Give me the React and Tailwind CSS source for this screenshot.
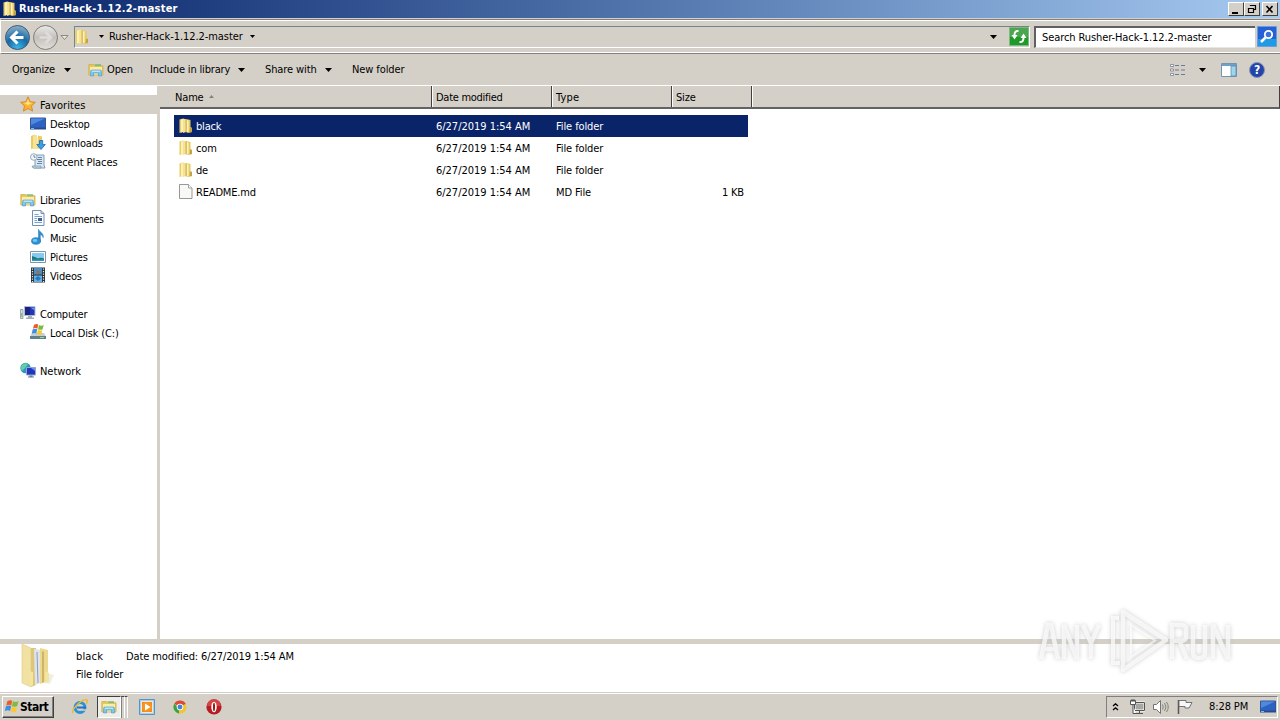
import React from "react";

const Svg = ({ w = 16, h = w, vb = "0 0 16 16", className = "", children }) => (
  <svg width={w} height={h} viewBox={vb} className={"shrink-0 " + className}>{children}</svg>
);

const Folder = ({ w = 16, className }) => (
  <Svg w={w} className={className}>
    <path d="M1.500 1.500L5 .5V14l-3.500 1z" fill="#e9cd62" />
    <path d="M5 .5l3 .8V14L5 15z" fill="#f6e28f" />
    <path d="M3 1.500L5 1v13l-2 .5z" fill="#fbf0b8" />
    <path d="M8 1l4.500 1v7l1.500 1v4l-4 1-2-1z" fill="#e6ca64" />
    <path d="M8.800 2l1.700.5v11.500l-1.700-.3z" fill="#fff3bd" />
    <path d="M12 9.500l2 .5v4l-2.500.6z" fill="#c5a243" />
    <path d="M8 1.500v13" stroke="#b99636" strokeWidth=".6" />
  </Svg>
);

const LibFolder = ({ w = 16, className }) => (
  <Svg w={w} className={className}>
    <path d="M.8 2.500h5l1.500 1.300H15v9.200H.8z" fill="#e6c95c" stroke="#d0b04c" strokeWidth=".8" />
    <path d="M2 5h12v7.500H2z" fill="#f9edaa" />
    <path d="M7 3h6" stroke="#5bb26b" strokeWidth="1.200" />
    <path d="M2.500 14V9.500Q2.500 8 4 8h8q1.500 0 1.500 1.500V14h-3v-3h-5v3z" fill="#7cc5ec" stroke="#4a97ca" strokeWidth=".6" />
    <path d="M4 9.200h8" stroke="#d8f1ff" />
  </Svg>
);

const Star = () => (
  <Svg className="-mt-px">
    <path d="M8 .8l2.200 4.900 5.200.6-3.900 3.600 1.100 5.200L8 12.500l-4.600 2.600 1.100-5.200L.6 6.300l5.200-.6z" fill="#fbb42d" stroke="#d98324" strokeWidth=".9" />
    <path d="M8 3l1.300 3.600 3 .4L8 9 4 7l3-.4z" fill="#ffe48a" />
  </Svg>
);

const Desktop = () => (
  <Svg>
    <path d="M.5 2h15v10.500H.5z" fill="#2c62c4" stroke="#3a5490" />
    <path d="M1 2.500h14L1 9z" fill="#4f8ae0" />
    <path d="M0 11.500h16V13.500H0z" fill="#2a4a8e" />
    <path d="M1 12h3v1H1z" fill="#66c4ea" />
  </Svg>
);

const Downloads = () => (
  <Svg className="-mt-px">
    <path d="M1 2l4-1.500V14l-4 1z" fill="#e9cd62" />
    <path d="M5 1h2v14H3V2z" fill="#f7e395" />
    <path d="M8 1.500l4 1v12H7z" fill="#e9cc67" />
    <path d="M9.500 6.500h3.200v4h2.600L11 15.500 6.800 10.500h2.700z" fill="#39a0e8" stroke="#1c67b0" strokeWidth=".8" />
  </Svg>
);

const Recent = () => (
  <Svg className="-mt-px">
    <path d="M5 2h9v10l1 3H4l1-3z" fill="#dbe7f0" stroke="#7593ab" strokeWidth=".9" />
    <path d="M8 4.500h4M7 6.500h5M8 8.500h4M7 10.500h5" stroke="#5f87aa" />
    <path d="M2 13h9v2H3z" fill="#c3d4e1" stroke="#7593ab" strokeWidth=".7" />
    <circle cx="3.800" cy="4" r="3.300" fill="#f2f6f9" stroke="#8da2b3" strokeWidth=".9" />
    <path d="M4 2v2.200h1.600" fill="none" stroke="#4d6a82" strokeWidth=".8" />
  </Svg>
);

const Documents = () => (
  <Svg className="-mt-px">
    <path d="M2.500.5h8.500l3 3v12H2.500z" fill="#f7fbff" stroke="#768fa8" />
    <path d="M11 .5v3h3" fill="none" stroke="#768fa8" />
    <path d="M4.500 4.500h4M4.500 6.500h7.500M4.500 12.500h7.500" stroke="#7ea3c6" />
    <path d="M4.500 8.500h2.500M4.500 10.500h2.500" stroke="#7ea3c6" />
    <path d="M8 8h4v3H8z" fill="#3b5f9e" />
  </Svg>
);

const Music = () => (
  <Svg className="-mt-px">
    <path d="M8.500.3c1 3 5.500 3.600 4.700 8.400-.4-2-1.700-2.900-2.900-3.100v7.400H8.500z" fill="#2d8ed0" stroke="#1e6fae" strokeWidth=".5" />
    <ellipse cx="6" cy="12" rx="4.500" ry="3.300" fill="#2c91d6" stroke="#1b6cab" strokeWidth=".6" />
    <ellipse cx="5" cy="11.500" rx="2.300" ry="1.400" fill="#72c9f4" />
  </Svg>
);

const Pictures = () => (
  <Svg>
    <path d="M.5 2.500h15v11H.5z" fill="#fff" stroke="#8095a6" />
    <path d="M2 4h12v8H2z" fill="#84cbed" />
    <path d="M2 7q4 1 6 2.500 3-1.500 6 0v1.500H2z" fill="#23777a" />
    <path d="M2 10.500h12V12H2z" fill="#2b9bc5" />
  </Svg>
);

const Videos = () => (
  <Svg className="-mt-px">
    <path d="M1 .5h14v15H1z" fill="#27323c" />
    <path d="M4 1h8v6.500H4z" fill="#4d8fc3" />
    <path d="M4 8.500h8v6.500H4z" fill="#63b2e3" />
    <path d="M5 6l3-3 3 3.500z" fill="#a36b49" />
    <path d="M8 9l3 2.500-3 2.500-3-2.500z" fill="#2c75b6" />
    <path d="M2.500 1.500v14M13.500 1.500v14" stroke="#e5ecf1" strokeWidth="1.200" strokeDasharray="1.200 1.300" />
  </Svg>
);

const Computer = () => (
  <Svg className="-mt-px">
    <path d="M.5 4.500h2.500v9H.5z" fill="#d7dfe3" stroke="#8795a0" strokeWidth=".8" />
    <path d="M1.300 8h1v4h-1z" fill="#67b757" />
    <path d="M4.500 1.500h10.500v9H4.500z" fill="#2237b5" stroke="#b3bccb" />
    <path d="M5 2h5v8H5z" fill="#1b2389" />
    <path d="M10.500 2.500h4v3z" fill="#6d94ee" />
    <path d="M8 11h4v1.500h2v1.500H6v-1.500h2z" fill="#a5afb9" />
  </Svg>
);

const Flag = () => (
  <g>
    <path d="M3.300 2.300Q6 .3 8.200 1.800L7.300 6.500Q5 5 2.300 6.500z" fill="#ef5a2a" />
    <path d="M9 2.200q2.700 1.600 5.500 0L13.200 7Q10.500 8.500 8 7z" fill="#7cbb3c" />
    <path d="M2 7.200Q5 5.800 7.200 7.200L6 12Q4 10.600.8 12z" fill="#3d8fe0" />
    <path d="M7.900 7.800q2.400 1.500 5.100.2l-1.300 5q-2.300 1-5-.4z" fill="#fbc734" />
  </g>
);

const Disk = () => (
  <Svg className="-mt-px">
    <path d="M2 9h12l2 3.500H0z" fill="#c3ced5" />
    <path d="M0 12h16v3H0z" fill="#62818f" />
    <path d="M10 13h4v1h-4z" fill="#8be36d" />
    <g transform="translate(1 -1) scale(.88)"><Flag /></g>
  </Svg>
);

const Network = () => (
  <Svg className="-mt-px">
    <circle cx="5.500" cy="6" r="5.200" fill="#2c96bd" />
    <path d="M2 3q3-3 6-1L6 5 4 7 2 9q-2-3 0-6" fill="#63cfa2" />
    <path d="M6.500 5.500h9v7.500h-9z" fill="#2136bb" stroke="#8ea6d2" />
    <path d="M11 6h4v3z" fill="#6a90ec" />
    <path d="M9.500 13.500h3v1H14v1H8v-1h1.500z" fill="#6b7ba0" />
  </Svg>
);

const Tri = ({ className = "" }) => (
  <Svg w={7} h={4} vb="0 0 7 4" className={className}><path d="M0 0h7L3.500 4z" fill="#000" /></Svg>
);
const SmallTri = ({ className = "" }) => (
  <Svg w={5} h={3} vb="0 0 5 3" className={className}><path d="M0 0h5L2.500 3z" fill="#000" /></Svg>
);

const WinBtn = ({ children, className = "" }) => (
  <div className={"flex h-[14px] w-[16px] items-center justify-center border border-t-white border-l-white border-r-[#404040] border-b-[#404040] bg-[#d4d0c8] " + className}>
    <Svg w={12} h={11} vb="0 0 12 11">{children}</Svg>
  </div>
);

const NavItem = ({ icon, text, root, active, track = "tracking-[-0.17px]" }) => (
  <div className={"flex h-[19px] items-center gap-1 " + (root ? "pl-[20px] " : "pl-[30px] ") + (active ? "bg-[#d4d0c8] " : "") + track}>
    {icon}
    <span className="pt-[2px]">{text}</span>
  </div>
);

const HeadCell = ({ className, children }) => (
  <div className={"flex h-full items-center border-r border-[#404040] pt-[2px] " + className}>{children}</div>
);

const files = [
  { name: "black", type: "File folder", size: "", selected: true },
  { name: "com", type: "File folder", size: "" },
  { name: "de", type: "File folder", size: "" },
  { name: "README.md", type: "MD File", size: "1 KB" },
];

const Page = () => (
  <Svg>
    <path d="M1.500.5h9l3.500 3.500v10.500H1.500z" fill="#f8f8f6" stroke="#8c8c88" strokeWidth=".9" />
    <path d="M10.500.5V4H14" fill="#fff" stroke="#8c8c88" strokeWidth=".8" />
  </Svg>
);

export default function App() {
  return (
    <div className="flex h-[720px] w-[1280px] flex-col overflow-hidden bg-[#d4d0c8] font-['DejaVu_Sans_Condensed','DejaVu_Sans',sans-serif] text-[11px] leading-[14px] tracking-[-0.17px] whitespace-nowrap text-black [font-stretch:condensed]">
      <div className="flex h-[18px] shrink-0 items-center bg-linear-to-r from-[#0a246a] to-[#a6caf0] pl-[2px]">
        <Folder />
        <span className="ml-px text-[11px] font-bold tracking-[0.22px] text-white">Rusher-Hack-1.12.2-master</span>
        <div className="ml-auto flex pr-[2px]">
          <WinBtn><path d="M2 8h6v2H2z" /></WinBtn>
          <WinBtn>
            <path d="M4.500 2v-.5h5v4H8M4 1.500h6M2.500 4.500h5v4h-5zM2 4.500h6" fill="none" stroke="#000" strokeWidth="1.200" />
          </WinBtn>
          <WinBtn className="ml-[2px]"><path d="M2.500 2l6 6.500M8.500 2l-6 6.500" stroke="#000" strokeWidth="1.600" /></WinBtn>
        </div>
      </div>

      <div className="mt-px flex h-[35px] shrink-0 items-center border-t border-b border-l border-t-[#808080] border-b-[#808080] border-l-white pl-[3px] shadow-[inset_0_1px_0_#fff,inset_0_-1px_0_#fff]">
        <svg width="66" height="28" viewBox="0 0 66 28" className="shrink-0">
          <defs>
            <radialGradient id="back" cx=".5" cy=".95" r=".95"><stop offset="0" stopColor="#39b9ec" /><stop offset=".5" stopColor="#176aa5" /><stop offset="1" stopColor="#8fb3cb" /></radialGradient>
            <linearGradient id="fwd" x2="0" y2="1"><stop offset="0" stopColor="#ecebe9" /><stop offset=".5" stopColor="#c3c0bc" /><stop offset="1" stopColor="#e3e0dc" /></linearGradient>
          </defs>
          <circle cx="13.500" cy="14.500" r="12" fill="url(#back)" stroke="#3c5a74" />
          <path d="M13.500 8.500L7.500 14.500l6 6M8 14.500h11.500" fill="none" stroke="#fff" strokeWidth="3" />
          <circle cx="41.500" cy="14.500" r="12" fill="url(#fwd)" stroke="#7e7b78" />
          <path d="M41.500 9l5.500 5.500-5.500 5.500M47 14.500H35.500" fill="none" stroke="#dedbd8" strokeWidth="2.600" />
          <path d="M57 12.500h7l-3.500 4z" fill="#e9e7e2" stroke="#77746f" strokeWidth=".8" />
        </svg>
        <div className="ml-[4px] flex h-[22px] w-[956px] items-center border border-t-[#738584] border-l-[#738584] border-r-white border-b-white">
          <Folder className="-ml-px" />
          <SmallTri className="ml-[9px]" />
          <span className="ml-[5px] tracking-[-0.06px]">Rusher-Hack-1.12.2-master</span>
          <SmallTri className="ml-[7px]" />
          <Tri className="ml-auto mr-[12px]" />
          <Svg w={20} h={19} vb="0 0 20 19">
            <path d="M.5.5h19v18H.5z" fill="#4ba64f" stroke="#7fb981" />
            <path d="M1 10h18v8H1z" fill="#1f9a2a" />
            <path d="M9.500 4q-4-.500-4 4" fill="none" stroke="#fff" strokeWidth="2" />
            <path d="M2.500 8h6l-3 4.500z" fill="#fff" />
            <path d="M10.500 15q4 .5 4-4" fill="none" stroke="#fff" strokeWidth="2" />
            <path d="M11.500 11h6l-3-4.500z" fill="#fff" />
          </Svg>
        </div>
        <div className="ml-[4px] flex h-[22px] w-[221px] items-center border-t-2 border-l-2 border-b border-t-[#606060] border-l-[#606060] border-b-[#e8e6e0] bg-white pt-px pl-[6px] tracking-[-0.09px]">Search Rusher-Hack-1.12.2-master</div>
        <Svg w={20} h={21} vb="0 0 20 21" className="ml-[2px]">
          <path d="M.5.500h19v20H.5z" fill="#2560d4" stroke="#6b9be4" />
          <path d="M1 13h18v7H1z" fill="#1f9ae4" />
          <circle cx="11.500" cy="8.500" r="3.700" fill="#3b71d9" stroke="#fff" strokeWidth="1.800" />
          <path d="M8.500 11.500L4 16" stroke="#fff" strokeWidth="2.500" />
        </Svg>
      </div>

      <div className="flex h-[32px] shrink-0 items-center border-b border-white pl-[12px]">
        <span className="w-[43px] pt-px">Organize</span><Tri className="ml-[9px]" />
        <LibFolder className="ml-[17px]" /><span className="ml-[3px] w-[27px] pt-px tracking-[-0.1px]">Open</span>
        <span className="ml-[16px] w-[80px] pt-px">Include in library</span><Tri className="ml-[8px]" />
        <span className="ml-[20px] w-[51px] pt-px tracking-[-0.1px]">Share with</span><Tri className="ml-[9px]" />
        <span className="ml-[20px] pt-px tracking-[-0.1px]">New folder</span>
        <div className="ml-auto flex items-center pr-[15px]">
          <Svg w={16} h={14} vb="0 0 16 14">
            <path d="M.5 1.500h3v2h-3zM.5 6h3v2h-3zM.5 10.500h3v2h-3z" fill="#fff" stroke="#777d85" strokeWidth=".8" />
            <path d="M5 2.500h4M11 2.500h4M5 7h4M11 7h4M5 11.500h4M11 11.500h4" stroke="#667d96" />
          </Svg>
          <Tri className="ml-[13px]" />
          <Svg w={16} h={14} vb="0 0 16 14" className="ml-[15px]">
            <path d="M.5.500h15v13H.5z" fill="#fff" stroke="#7394b0" />
            <path d="M1 1h14v2H1z" fill="#6fa0c6" />
            <path d="M10 3h5v10h-5z" fill="#9ed5ee" stroke="#5683a6" strokeWidth=".7" />
          </Svg>
          <div className="ml-[12px] flex h-4 w-4 items-center justify-center rounded-full border border-[#8992b8] bg-[#2345a8] text-[12px] font-bold text-white">?</div>
        </div>
      </div>

      <div className="flex h-[553px] shrink-0 bg-white">
        <div className="flex w-[157px] flex-col pt-[9px]">
          <NavItem root active icon={<Star />} text="Favorites" track="tracking-[0.1px]" />
          <NavItem icon={<Desktop />} text="Desktop" />
          <NavItem icon={<Downloads />} text="Downloads" />
          <NavItem icon={<Recent />} text="Recent Places" track="tracking-[-0.1px]" />
          <div className="h-[19px]" />
          <NavItem root icon={<LibFolder />} text="Libraries" track="tracking-[-0.25px]" />
          <NavItem icon={<Documents />} text="Documents" track="tracking-[-0.3px]" />
          <NavItem icon={<Music />} text="Music" track="tracking-[-0.35px]" />
          <NavItem icon={<Pictures />} text="Pictures" />
          <NavItem icon={<Videos />} text="Videos" />
          <div className="h-[19px]" />
          <NavItem root icon={<Computer />} text="Computer" track="tracking-[-0.25px]" />
          <NavItem icon={<Disk />} text="Local Disk (C:)" />
          <div className="h-[19px]" />
          <NavItem root icon={<Network />} text="Network" track="tracking-[-0.05px]" />
        </div>
        <div className="w-[3px] bg-[#d4d0c8]" />
        <div className="flex flex-1 flex-col">
          <div className="flex h-[23px] items-center border-r border-b-2 border-[#404040] border-b-[#626262] bg-[#d4d0c8]">
            <HeadCell className="w-[272px] pl-[15px]">Name
              <Svg w={5} h={3} vb="0 0 5 3" className="mb-[3px] ml-[5px]"><path d="M0 3h5L2.500 0z" fill="#85827d" /></Svg>
            </HeadCell>
            <HeadCell className="w-[120px] border-l border-l-white pl-[3px] tracking-[-0.27px]">Date modified</HeadCell>
            <HeadCell className="w-[120px] border-l border-l-white pl-[3px] tracking-[0.2px]">Type</HeadCell>
            <HeadCell className="w-[80px] border-l border-l-white pl-[3px]">Size</HeadCell>
            <div className="h-full w-px bg-white" />
          </div>
          <div className="mt-[6px] ml-[14px] flex w-[574px] flex-col">
            {files.map((f) => (
              <div key={f.name} className={"flex h-[22px] items-center " + (f.selected ? "bg-[#0a246a] text-white" : "")}>
                <div className="flex w-[262px] items-center gap-[2px] pl-[4px]">{f.size ? <Page /> : <Folder />}<span className="pt-[2px]">{f.name}</span></div>
                <div className="w-[120px] pt-[2px] tracking-[-0.02px]">6/27/2019 1:54 AM</div>
                <div className="w-[120px] pt-[2px] tracking-[-0.1px]">{f.type}</div>
                <div className="flex-1 pt-[2px] pr-[4px] text-right">{f.size}</div>
              </div>
            ))}
          </div>
        </div>
      </div>

      <div className="relative h-[5px] shrink-0 bg-[#d4d0c8]">
        <svg width="210" height="76" viewBox="0 0 210 76" className="absolute -top-[37px] left-[1030px] z-10 drop-shadow-[0_0_2px_#bbb]">
          <g fill="none" stroke="#fff" strokeWidth="4.500" strokeOpacity=".72">
            <path d="M11 57l7-34h3l7 34M14 47h12" />
            <path d="M34 57V23l13 34V23" />
            <path d="M53 23l8 18 8-18M61 41v16" />
            <path d="M89 16h-6v45h7" strokeWidth="4" />
            <path d="M93 10v58L136 38z" strokeWidth="4.500" strokeLinejoin="round" />
            <path d="M101 23v32L125 38.500z" strokeWidth="2" strokeOpacity=".6" />
            <path d="M142 57V23h9q5 0 5 5v6q0 5-5 5h-9M150 40l7 17" />
            <path d="M163 23v27q0 6 6 6t6-6V23" />
            <path d="M183 57V23l15 34V23" />
          </g>
        </svg>
      </div>
      <div className="flex h-[48px] shrink-0 bg-white">
        <svg width="36" height="46" viewBox="0 0 36 46" className="ml-[20px] shrink-0">
          <path d="M27 29l7 2-4 9-6-1z" fill="#f0eee6" />
          <path d="M2 0l9 4v39l-9-4z" fill="#f1e1a2" stroke="#dfcb85" strokeWidth=".6" />
          <path d="M11 4l5 0v37l-5 2z" fill="#dcc677" />
          <path d="M14 5l7 1v33l-6 2z" fill="#dfe4ea" />
          <path d="M17 8l1 31" stroke="#8c9cb8" />
          <path d="M20 4l8 2v31l-8 3z" fill="#ecd98d" />
          <path d="M22 7l2 1v30l-2 1z" fill="#cfb465" />
          <path d="M9 27l4 1v13l-3 2zM25 27l4 2v9l-4 1z" fill="#f4e4a2" />
        </svg>
        <div className="ml-[20px] flex flex-col gap-[4px] pt-[6px]">
          <div className="flex"><span className="w-[50px] tracking-[0.15px]">black</span><span className="tracking-[-0.1px]">Date modified: 6/27/2019 1:54 AM</span></div>
          <span className="tracking-[-0.1px]">File folder</span>
        </div>
      </div>

      <div className="flex h-[28px] shrink-0 items-center border-t border-[#d4d0c8] shadow-[inset_0_1px_0_#fff]">
        <div className="mt-[1px] ml-[2px] flex h-[22px] w-[52px] items-center border border-t-white border-l-white border-r-[#404040] border-b-[#404040] pl-px text-[12px] font-bold tracking-[-0.5px] shadow-[inset_-1px_-1px_0_#808080]">
          <Svg w={16}><Flag /></Svg><span>Start</span>
        </div>
        <Svg w={16} className="ml-[18px]">
          <circle cx="8" cy="8.500" r="5" fill="none" stroke="#2b91d9" strokeWidth="3" />
          <path d="M5 8.500h9" stroke="#2374c0" strokeWidth="2" />
          <path d="M1 14Q-1 12 5 6T15 1q1 1-1 4" fill="none" stroke="#e8ba38" strokeWidth="1.500" />
          <path d="M10 11h5" stroke="#d4d0c8" strokeWidth="1.500" />
        </Svg>
        <div className="ml-[9px] flex h-[22px] w-[24px] items-center border border-t-[#404040] border-l-[#404040] border-r-white border-b-white bg-[#efede9] pl-[3px]"><LibFolder /></div>
        <div className="h-[22px] w-[4px] border-r border-l border-t border-t-[#404040] border-r-white border-l-[#808080]" />
        <div className="h-[22px] w-[3px] border-r border-t border-t-[#404040] border-r-white" />
        <Svg w={16} className="ml-[11px]">
          <path d="M.5.500h15v15H.5z" fill="#a9cfea" stroke="#5594c4" />
          <path d="M2.500 2.500h11v11h-11z" fill="#f18a18" stroke="#fff" strokeWidth=".7" />
          <circle cx="8" cy="8" r="5" fill="#f79523" />
          <path d="M6 4.500l5.500 3.500L6 11.500z" fill="#fff" />
        </Svg>
        <Svg w={14} className="ml-[18px]">
          <circle cx="8" cy="8" r="7.500" fill="#f0c630" />
          <path d="M8 8L1.500 4.300A7.500 7.500 0 0 1 14.500 4.300z" fill="#df4838" />
          <path d="M1.500 4.200L6.500 10 7 15.400A7.500 7.500 0 0 1 1.500 4.200" fill="#34a350" />
          <circle cx="8" cy="8" r="3.700" fill="#fff" /><circle cx="8" cy="8" r="2.800" fill="#4285d8" />
        </Svg>
        <Svg w={16} className="ml-[19px]">
          <circle cx="8" cy="8" r="7.600" fill="#b51d22" /><path d="M1 7a7 7 0 0 1 14 0z" fill="#d44442" />
          <ellipse cx="8" cy="8" rx="2.700" ry="5.200" fill="#fff" /><ellipse cx="8" cy="8" rx="1" ry="4.200" fill="#951418" />
        </Svg>
        <div className="ml-auto mr-[2px] flex h-[22px] w-[172px] items-center border border-t-[#808080] border-l-[#808080] border-r-white border-b-white pl-[5px]">
          <Svg w={7} h={8} vb="0 0 6 8"><path d="M.5 3L3 .8 5.500 3M.5 7L3 4.800 5.500 7" fill="none" stroke="#000" strokeWidth="1.300" /></Svg>
          <Svg w={16} className="ml-[10px]">
            <path d="M5.500 3.500h10v8h-10z" fill="#a9a7a3" stroke="#fff" strokeWidth="2" />
            <path d="M5.500 3.500h10v8h-10zM7 14.500h7M10.500 12v2" fill="none" stroke="#555" />
            <path d="M1.500 1.500h5v4h-5zM4 6v8.500h3" fill="#fff" stroke="#555" />
            <path d="M3 0v3M5 0v3" stroke="#555" />
          </Svg>
          <Svg w={16} className="ml-[8px]">
            <path d="M.5 5.500h3l4-4v13l-4-4h-3z" fill="#fff" stroke="#666" strokeWidth=".9" />
            <path d="M9.500 5.500q1.500 2.500 0 5M11.500 4q3 4 0 8M13.500 3q3.500 5 0 10" fill="none" stroke="#777" strokeWidth=".9" />
          </Svg>
          <Svg w={16} className="ml-[8px]">
            <path d="M1.500 1v14" stroke="#555" strokeWidth="1.500" />
            <path d="M2 1.500h7v2h6l-3 5.500H8V7.500H2z" fill="#f7f7f7" stroke="#666" strokeWidth=".9" />
          </Svg>
          <span className="ml-[16px] pt-px tracking-[-0.1px]">8:28 PM</span>
          <div className="mr-[1px] ml-auto flex"><Desktop /></div>
        </div>
      </div>
    </div>
  );
}
